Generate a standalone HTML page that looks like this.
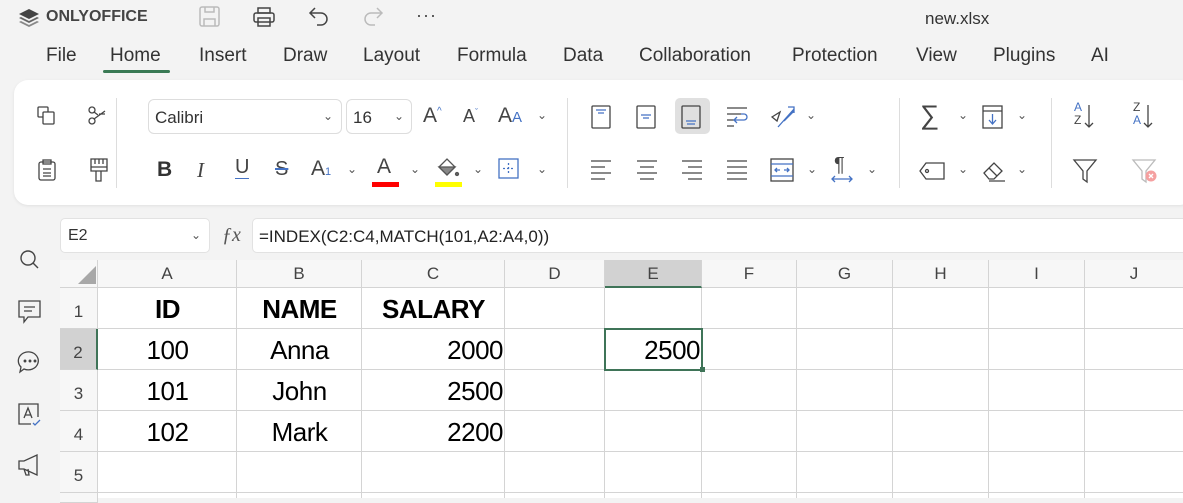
<!DOCTYPE html>
<html><head><meta charset="utf-8"><style>
*{margin:0;padding:0;box-sizing:border-box}
body{width:1183px;height:498px;overflow:hidden;background:#f3f3f3;font-family:"Liberation Sans",sans-serif;position:relative;color:#222}
.a{position:absolute}
.menu{top:45px;font-size:19px;color:#333}
.card{left:14px;top:80px;width:1180px;height:125px;background:#fff;border-radius:14px;box-shadow:0 1px 3px rgba(0,0,0,.08)}
.sep{width:1px;background:#ddd;top:98px;height:90px}
.box{border:1px solid #ddd;border-radius:6px;background:#fff;font-size:17px;padding:8px 6px;color:#333}
.chev{font-size:12px;color:#555}
svg{position:absolute;overflow:visible}
.grid{left:60px;top:260px;width:1123px;height:238px;background:#fff}
.hc{position:absolute;top:0;height:28px;background:#f7f7f7;border-right:1px solid #d4d4d4;border-bottom:1px solid #d4d4d4;text-align:center;font-size:17px;line-height:28px;color:#444}
.rh{position:absolute;left:0;width:38px;background:#f7f7f7;border-right:1px solid #d4d4d4;border-bottom:1px solid #d4d4d4;text-align:center;font-size:17px;line-height:50px;color:#444}
.vl{position:absolute;top:28px;width:1px;height:210px;background:#d4d4d4}
.hl{position:absolute;left:38px;height:1px;width:1085px;background:#d4d4d4}
.c{position:absolute;font-size:26px;color:#000;line-height:41px;height:41px;letter-spacing:-0.5px}
</style></head><body>
<svg style="left:18px;top:8px" width="22" height="20" viewBox="0 0 22 20"><path d="M11 1L21 6 11 11 1 6Z" fill="#444"/><path d="M3 9L11 13 19 9 21 10 11 15 1 10Z" fill="#666"/><path d="M3 13L11 17 19 13 21 14 11 19 1 14Z" fill="#888"/></svg>
<div class="a" style="left:46px;top:8px;font-size:16px;font-weight:bold;color:#444">ONLYOFFICE</div>
<svg style="left:199px;top:6px" width="22" height="22" fill="none" stroke="#bbb" stroke-width="1.5"><rect x="1" y="1" width="19" height="19" rx="2"/><path d="M5 20v-7h11v7M6 1v5h9V1"/></svg>
<svg style="left:253px;top:7px" width="22" height="20" fill="none" stroke="#444" stroke-width="1.5"><rect x="1" y="6" width="20" height="9" rx="2"/><rect x="5" y="1" width="12" height="5"/><rect x="5" y="11" width="12" height="8"/></svg>
<svg style="left:308px;top:7px" width="22" height="20" fill="none" stroke="#444" stroke-width="1.5"><path d="M7 1L2 6l5 5M2 6h11a6 6 0 010 12h-4"/></svg>
<svg style="left:362px;top:7px" width="22" height="20" fill="none" stroke="#bbb" stroke-width="1.5"><path d="M15 1l5 5-5 5M20 6H9a6 6 0 000 12h4"/></svg>
<div class="a" style="left:416px;top:5px;font-size:18px;color:#444;letter-spacing:1px">···</div>
<div class="a" style="left:925px;top:9px;font-size:17px;color:#333">new.xlsx</div>
<div class="a menu" style="left:46px">File</div>
<div class="a menu" style="left:110px">Home</div>
<div class="a" style="left:103px;top:70px;width:67px;height:3px;border-radius:2px;background:#3a7a55"></div>
<div class="a menu" style="left:199px">Insert</div>
<div class="a menu" style="left:283px">Draw</div>
<div class="a menu" style="left:363px">Layout</div>
<div class="a menu" style="left:457px">Formula</div>
<div class="a menu" style="left:563px">Data</div>
<div class="a menu" style="left:639px">Collaboration</div>
<div class="a menu" style="left:792px">Protection</div>
<div class="a menu" style="left:916px">View</div>
<div class="a menu" style="left:993px">Plugins</div>
<div class="a menu" style="left:1091px">AI</div>
<div class="a card"></div>
<div class="a sep" style="left:116px"></div>
<div class="a sep" style="left:567px"></div>
<div class="a sep" style="left:899px"></div>
<div class="a sep" style="left:1051px"></div>
<svg style="left:37px;top:106px" width="20" height="20" fill="none" stroke="#444" stroke-width="1.3"><rect x="1" y="1" width="10" height="10" rx="1"/><rect x="6" y="6" width="11" height="12" rx="1" fill="#fff"/></svg>
<svg style="left:87px;top:106px" width="20" height="20" fill="none" stroke="#444" stroke-width="1.3"><circle cx="5" cy="4" r="3"/><circle cx="5" cy="15" r="3"/><path d="M7 13L18 5M7 6l4 3M12 8h6"/></svg>
<svg style="left:38px;top:159px" width="18" height="22" fill="none" stroke="#444" stroke-width="1.3"><rect x="1" y="3" width="16" height="18" rx="2"/><rect x="5" y="1" width="8" height="4"/><path d="M5 10h8M5 14h8M5 17h8"/></svg>
<svg style="left:90px;top:158px" width="18" height="24" fill="none" stroke="#444" stroke-width="1.3"><path d="M1 1h16v12H1zM1 9h16M5 1v5M9 1v5M13 1v5M6 13v10h5V13"/></svg>
<div class="a box" style="left:148px;top:99px;width:194px;height:35px">Calibri<span class="a chev" style="right:8px;top:9px">⌄</span></div>
<div class="a box" style="left:346px;top:99px;width:66px;height:35px">16<span class="a chev" style="right:7px;top:9px">⌄</span></div>
<div class="a" style="left:423px;top:104px;font-size:21px;color:#444">A<sup style="font-size:10px;color:#4472c4">^</sup></div>
<div class="a" style="left:463px;top:106px;font-size:18px;color:#444">A<sup style="font-size:9px;color:#4472c4">ˇ</sup></div>
<div class="a" style="left:498px;top:104px;font-size:21px;color:#444">A<span style="font-size:15px;color:#4472c4">A</span></div>
<div class="a chev" style="left:537px;top:108px">⌄</div>
<div class="a" style="left:157px;top:158px;font-size:21px;font-weight:bold;color:#333">B</div>
<div class="a" style="left:197px;top:158px;font-size:21px;font-style:italic;color:#444;font-family:'Liberation Serif'">I</div>
<div class="a" style="left:235px;top:156px;font-size:20px;color:#444;border-bottom:1.5px solid #4472c4;line-height:22px">U</div>
<div class="a" style="left:275px;top:158px;font-size:20px;color:#444;text-decoration:line-through;text-decoration-color:#4472c4">S</div>
<div class="a" style="left:311px;top:157px;font-size:21px;color:#444">A<span style="font-size:11px;color:#4472c4">1</span></div>
<div class="a chev" style="left:347px;top:162px">⌄</div>
<div class="a" style="left:377px;top:155px;font-size:21px;color:#444">A</div>
<div class="a" style="left:372px;top:182px;width:27px;height:5px;background:#f00"></div>
<div class="a chev" style="left:410px;top:162px">⌄</div>
<svg style="left:436px;top:157px" width="24" height="22" fill="none" stroke="#555" stroke-width="1.3"><path d="M3 10L11 2 19 10 11 18Z"/><path d="M3 10h16l-8 8z" fill="#888"/><circle cx="21" cy="17" r="1.5" fill="#666"/></svg>
<div class="a" style="left:435px;top:182px;width:27px;height:5px;background:#ff0"></div>
<div class="a chev" style="left:473px;top:162px">⌄</div>
<svg style="left:498px;top:158px" width="22" height="22" fill="none" stroke="#4472c4" stroke-width="1.3"><rect x="1" y="1" width="19" height="19"/><path d="M10.5 5v11M5 10.5h11" stroke-dasharray="2 2"/></svg>
<div class="a chev" style="left:537px;top:162px">⌄</div>
<div class="a" style="left:675px;top:98px;width:35px;height:36px;background:#e0e0e0;border-radius:5px"></div>
<svg style="left:591px;top:105px" width="130" height="24" fill="none" stroke-width="1.3"><rect x="1" y="1" width="18" height="22" rx="1" stroke="#444"/><path d="M5 5h10M7 8h6" stroke="#4472c4"/><rect x="46" y="1" width="18" height="22" rx="1" stroke="#444"/><path d="M50 10h10M52 13h6" stroke="#4472c4"/><rect x="91" y="1" width="18" height="22" rx="1" stroke="#444"/><path d="M95 16h10M96 19h8" stroke="#4472c4"/></svg>
<svg style="left:726px;top:107px" width="24" height="20" fill="none" stroke-width="1.3"><path d="M1 1h20M1 7h14M1 13h7M1 19h7" stroke="#444"/><path d="M9 13h9a3 3 0 000-6h-3M11 10l-3 3 3 3" stroke="#4472c4"/></svg>
<svg style="left:770px;top:105px" width="26" height="24" fill="none" stroke-width="1.3"><path d="M2 12l8-5-3 9z" stroke="#444"/><path d="M8 22L24 4M18 2h6v6M14 16L24 6" stroke="#4472c4"/></svg>
<div class="a chev" style="left:806px;top:108px">⌄</div>
<svg style="left:590px;top:160px" width="150" height="20" fill="none" stroke="#444" stroke-width="1.3"><path d="M1 1h20M1 7h14M1 13h20M1 19h14"/><path d="M47 1h20M50 7h14M47 13h20M50 19h14"/><path d="M92 1h20M98 7h14M92 13h20M98 19h14"/><path d="M137 1h20M137 7h20M137 13h20M137 19h20"/></svg>
<svg style="left:770px;top:158px" width="24" height="24" fill="none" stroke-width="1.3"><rect x="1" y="1" width="22" height="22" stroke="#444"/><path d="M1 6h22M1 18h22" stroke="#4472c4"/><path d="M5 12h5M14 12h5M7 10l-2 2 2 2M17 10l2 2-2 2" stroke="#4472c4"/></svg>
<div class="a chev" style="left:807px;top:162px">⌄</div>
<div class="a" style="left:834px;top:154px;font-size:20px;color:#444">¶</div>
<svg style="left:831px;top:175px" width="22" height="8" fill="none" stroke="#4472c4" stroke-width="1.3"><path d="M1 4h20M4 1L1 4l3 3M18 1l3 3-3 3"/></svg>
<div class="a chev" style="left:867px;top:162px">⌄</div>
<div class="a" style="left:920px;top:100px;font-size:27px;color:#444">∑</div>
<div class="a chev" style="left:958px;top:108px">⌄</div>
<svg style="left:982px;top:105px" width="22" height="24" fill="none" stroke-width="1.3"><rect x="1" y="1" width="19" height="22" stroke="#444"/><path d="M1 6h19" stroke="#444"/><path d="M10.5 9v10M7 15l3.5 4 3.5-4" stroke="#4472c4"/></svg>
<div class="a chev" style="left:1017px;top:108px">⌄</div>
<svg style="left:919px;top:162px" width="26" height="18" fill="none" stroke="#444" stroke-width="1.3"><path d="M7 1h18v16H7L1 9z"/><circle cx="8" cy="9" r="1.5"/></svg>
<div class="a chev" style="left:958px;top:162px">⌄</div>
<svg style="left:982px;top:160px" width="24" height="22" fill="none" stroke="#444" stroke-width="1.3"><path d="M2 13L12 3l8 8-8 8H7z"/><path d="M7 8l8 8M7 21h16"/></svg>
<div class="a chev" style="left:1017px;top:162px">⌄</div>
<div class="a" style="left:1074px;top:101px;font-size:12px;line-height:13px;color:#4472c4">A<br><span style="color:#444">Z</span></div>
<svg style="left:1084px;top:104px" width="10" height="26" fill="none" stroke="#444" stroke-width="1.3"><path d="M5 1v22M1 19l4 4 4-4"/></svg>
<div class="a" style="left:1133px;top:101px;font-size:12px;line-height:13px;color:#444">Z<br><span style="color:#4472c4">A</span></div>
<svg style="left:1143px;top:104px" width="10" height="26" fill="none" stroke="#444" stroke-width="1.3"><path d="M5 1v22M1 19l4 4 4-4"/></svg>
<svg style="left:1073px;top:159px" width="24" height="24" fill="none" stroke="#444" stroke-width="1.3"><path d="M1 1h22l-9 11v11l-4-3v-8z"/></svg>
<svg style="left:1132px;top:159px" width="30" height="26" fill="none" stroke="#bbb" stroke-width="1.3"><path d="M1 1h22l-9 11v11l-4-3v-8z"/><circle cx="19" cy="17" r="5.5" fill="#f5a0a0" stroke="none"/><path d="M17 15l4 4M21 15l-4 4" stroke="#fff"/></svg>
<div class="a" style="left:60px;top:218px;width:150px;height:35px;background:#fff;border:1px solid #e2e2e2;border-radius:5px;font-size:16px;padding:8px 7px;color:#333">E2<span class="a chev" style="right:8px;top:9px">⌄</span></div>
<div class="a" style="left:222px;top:224px;font-size:20px;font-style:italic;color:#555;font-family:'Liberation Serif'">ƒx</div>
<div class="a" style="left:252px;top:218px;width:940px;height:35px;background:#fff;border:1px solid #e2e2e2;border-radius:5px;font-size:17px;padding:8px 6px;color:#222">=INDEX(C2:C4,MATCH(101,A2:A4,0))</div>
<svg style="left:19px;top:249px" width="22" height="22" fill="none" stroke="#444" stroke-width="1.4"><circle cx="9" cy="9" r="7"/><path d="M14 14l5 5"/></svg>
<svg style="left:18px;top:300px" width="24" height="24" fill="none" stroke="#444" stroke-width="1.3"><path d="M1 1h21v16H10l-4 5v-5H1z"/><path d="M6 7h11M6 11h8"/></svg>
<svg style="left:18px;top:350px" width="24" height="24" fill="none" stroke="#444" stroke-width="1.3"><path d="M12 2a10 9 0 11-6 17l-4 3 1-5A10 9 0 0112 2z"/><circle cx="7" cy="11" r=".8" fill="#444"/><circle cx="12" cy="11" r=".8" fill="#444"/><circle cx="17" cy="11" r=".8" fill="#444"/></svg>
<svg style="left:18px;top:403px" width="26" height="26" fill="none" stroke="#444" stroke-width="1.3"><path d="M20 14V1H1v20h12"/><path d="M6 15l4-10 4 10M7 12h6" /><path d="M15 20l2 2 5-5" stroke="#4472c4"/></svg>
<svg style="left:18px;top:454px" width="24" height="22" fill="none" stroke="#444" stroke-width="1.3"><path d="M1 7h5l13-6v20L6 15H1zM6 15l2 6h3l-1-6"/></svg>
<div class="a grid">
<div class="hc" style="left:0;width:38px;background:#f7f7f7"></div>
<svg style="left:17px;top:5px" width="20" height="20"><path d="M19 1V19H1z" fill="#a8a8a8"/></svg>
<div class="hc" style="left:38px;width:139px">A</div>
<div class="hc" style="left:177px;width:125px">B</div>
<div class="hc" style="left:302px;width:143px">C</div>
<div class="hc" style="left:445px;width:100px">D</div>
<div class="hc" style="left:545px;width:97px;background:#d2d2d2;border-bottom:2px solid #3f7458">E</div>
<div class="hc" style="left:642px;width:95px">F</div>
<div class="hc" style="left:737px;width:96px">G</div>
<div class="hc" style="left:833px;width:96px">H</div>
<div class="hc" style="left:929px;width:96px">I</div>
<div class="hc" style="left:1025px;width:98px;border-right:none">J</div>
<div class="rh" style="top:28px;height:41px;line-height:48px">1</div>
<div class="rh" style="top:69px;height:41px;line-height:48px;background:#d2d2d2;border-right:2px solid #3f7458">2</div>
<div class="rh" style="top:110px;height:41px;line-height:48px">3</div>
<div class="rh" style="top:151px;height:41px;line-height:48px">4</div>
<div class="rh" style="top:192px;height:41px;line-height:48px">5</div>
<div class="rh" style="top:233px;height:10px"></div>
<div class="vl" style="left:176px"></div><div class="vl" style="left:301px"></div><div class="vl" style="left:444px"></div><div class="vl" style="left:544px"></div><div class="vl" style="left:641px"></div><div class="vl" style="left:736px"></div><div class="vl" style="left:832px"></div><div class="vl" style="left:928px"></div><div class="vl" style="left:1024px"></div>
<div class="hl" style="top:68px"></div><div class="hl" style="top:109px"></div><div class="hl" style="top:150px"></div><div class="hl" style="top:191px"></div><div class="hl" style="top:232px"></div>
<div class="c" style="left:38px;width:139px;top:29px;text-align:center;font-weight:bold">ID</div>
<div class="c" style="left:177px;width:125px;top:29px;text-align:center;font-weight:bold">NAME</div>
<div class="c" style="left:302px;width:143px;top:29px;text-align:center;font-weight:bold">SALARY</div>
<div class="c" style="left:38px;width:139px;top:70px;text-align:center">100</div>
<div class="c" style="left:177px;width:125px;top:70px;text-align:center">Anna</div>
<div class="c" style="left:302px;width:141px;top:70px;text-align:right">2000</div>
<div class="c" style="left:38px;width:139px;top:111px;text-align:center">101</div>
<div class="c" style="left:177px;width:125px;top:111px;text-align:center">John</div>
<div class="c" style="left:302px;width:141px;top:111px;text-align:right">2500</div>
<div class="c" style="left:38px;width:139px;top:152px;text-align:center">102</div>
<div class="c" style="left:177px;width:125px;top:152px;text-align:center">Mark</div>
<div class="c" style="left:302px;width:141px;top:152px;text-align:right">2200</div>
<div class="a" style="left:544px;top:68px;width:99px;height:43px;border:2px solid #3f7458"></div>
<div class="a" style="left:640px;top:107px;width:5px;height:5px;background:#3f7458"></div>
<div class="c" style="left:545px;width:95px;top:70px;text-align:right">2500</div>
</div>
</body></html>
